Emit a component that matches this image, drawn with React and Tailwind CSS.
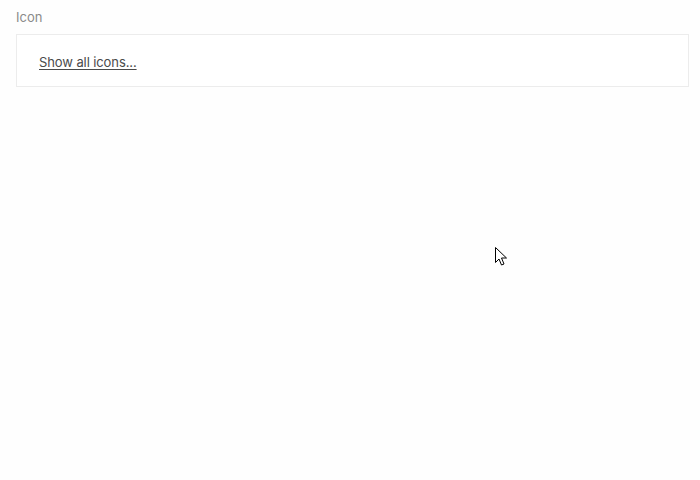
export default function App() {
  return (
    <div className="relative h-[480px] w-[700px] bg-[#fefefe] px-4 pt-[9px]" style={{ fontFamily: 'Inter, "Noto Sans", sans-serif' }}>
      <div className="text-[13px] leading-[17px] text-[#8a8a8a]">Icon</div>
      <div className="mt-2 flex h-[53px] w-[673px] items-center border border-[#ececec] bg-white px-[22px] pt-[3px]">
        <a href="#" className="text-[13px] leading-[18px] tracking-[-0.1px] text-[#4a4a4a] underline underline-offset-2">
          Show all icons...
        </a>
      </div>
      <svg className="absolute left-[495px] top-[247px]" width="13" height="20" viewBox="0 0 13 20">
        <path d="M0.5 0.5 L0.5 15.5 L4 12 L6.5 18 L9 17 L6.5 11 L11.5 11 Z" fill="#fff" stroke="#000" strokeWidth="1" strokeLinejoin="miter" />
      </svg>
    </div>
  );
}
